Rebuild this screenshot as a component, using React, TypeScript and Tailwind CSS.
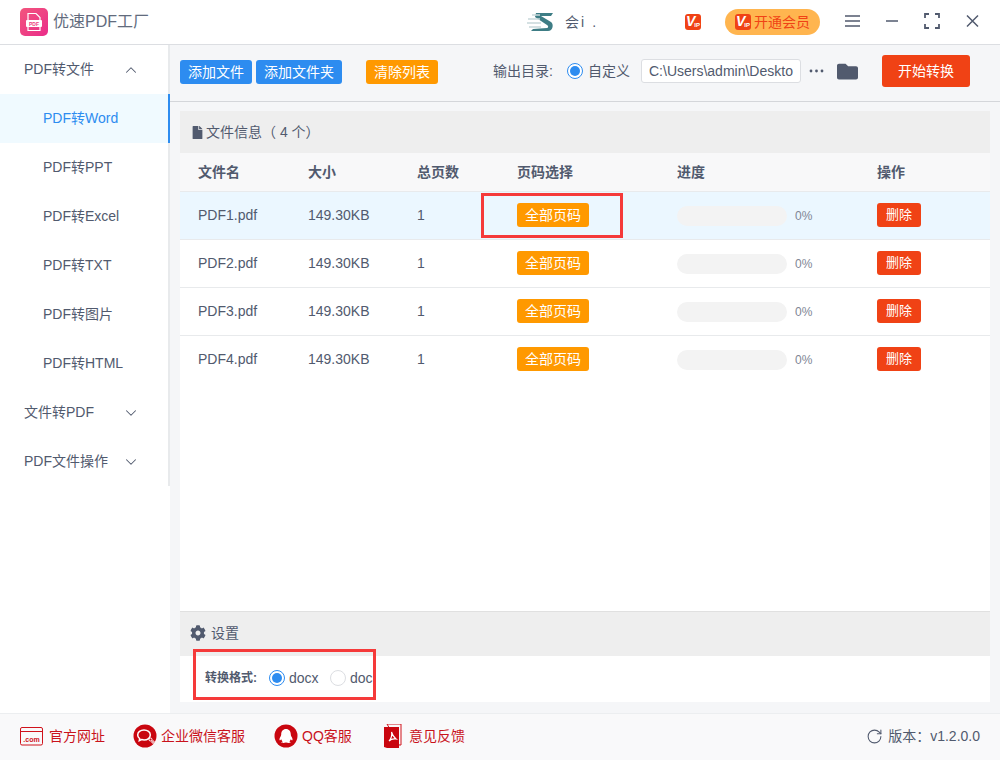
import React from "react";
import { ChevronDown, ChevronUp, RotateCw } from "lucide-react";
import { FaCog, FaFile, FaFolder } from "react-icons/fa";

const font = { fontFamily: '"Liberation Sans", "Noto Sans CJK SC", sans-serif' };

const subItems = ["PDF转Word", "PDF转PPT", "PDF转Excel", "PDF转TXT", "PDF转图片", "PDF转HTML"];
const files = ["PDF1.pdf", "PDF2.pdf", "PDF3.pdf", "PDF4.pdf"];
const columns = "grid grid-cols-[110px_109px_100px_160px_200px_1fr] items-center pl-[18px]";

const VipMark = ({ className }: { className: string }) => (
  <span className={`relative inline-block shrink-0 rounded-[3px] bg-[#f04215] text-white ${className}`}>
    <span className="absolute left-[1px] top-[-2px] text-[14px] font-bold italic leading-[18px]">V</span>
    <span className="absolute bottom-[1px] right-[1px] text-[6px] font-bold leading-[7px]">IP</span>
  </span>
);

const Radio = ({ checked }: { checked?: boolean }) =>
  checked ? (
    <span className="flex h-4 w-4 shrink-0 items-center justify-center rounded-full border border-[#2d8cf0] bg-white">
      <span className="h-[10px] w-[10px] rounded-full bg-[#2d8cf0]" />
    </span>
  ) : (
    <span className="h-4 w-4 shrink-0 rounded-full border border-[#dcdee2] bg-white" />
  );

const ComIcon = () => (
  <svg width="23" height="19" viewBox="0 0 23 19" fill="none" stroke="#d0121b" strokeWidth="1">
    <rect x="0.5" y="0.5" width="22" height="17.500" rx="1.500" />
    <path d="M1 4.500h21" />
    <text x="11.500" y="14.500" fontSize="7" fontWeight="700" fill="#d0121b" stroke="none" textAnchor="middle">.com</text>
  </svg>
);

const WechatIcon = () => (
  <svg width="24" height="24" viewBox="0 0 24 24">
    <circle cx="12" cy="12" r="11.500" fill="#c9060f" />
    <path d="M11 6c-3.600 0-6.300 2.200-6.300 5 0 1.500.8 2.800 2 3.700l-.4 2 2.300-1.100c.8.2 1.600.4 2.400.4 3.600 0 6.300-2.200 6.300-5S14.600 6 11 6z" fill="none" stroke="#fff" strokeWidth="1.500" />
    <circle cx="17.500" cy="15.500" r="1.500" fill="none" stroke="#fff" strokeWidth="1" />
    <circle cx="20" cy="18" r="1.200" fill="none" stroke="#fff" strokeWidth="1" />
  </svg>
);

const QQIcon = () => (
  <svg width="24" height="24" viewBox="0 0 24 24">
    <circle cx="12" cy="12" r="11.500" fill="#c9060f" />
    <path d="M12 5c-3 0-4.800 2.300-4.800 5.200 0 1-.2 1.600-.9 2.800-.8 1.400-1.100 2.900-.6 3.300.4.300 1-.3 1.500-1 .3 1 .8 1.700 1.400 2.200-.8.300-1.300.7-1.100 1.100.3.500 2.800.5 4.500 0 1.700.5 4.200.5 4.500 0 .2-.4-.3-.8-1.100-1.100.6-.5 1.100-1.200 1.400-2.200.5.700 1.100 1.300 1.500 1 .5-.4.200-1.900-.6-3.300-.7-1.200-.9-1.800-.9-2.800C16.800 7.300 15 5 12 5z" fill="#fff" />
  </svg>
);

const PdfIcon = () => (
  <svg width="18" height="24" viewBox="0 0 18 24">
    <path d="M3 0h14v21h-2z" fill="none" stroke="#d0121b" strokeWidth="1" />
    <path d="M0 3h15v21H3l-3-1z" fill="#c9060f" />
    <path d="M7.500 8c.8 3 2 5 4.500 7-2-.3-5 0-7 2 2-2 3.500-6 2.500-9z" fill="none" stroke="#fff" strokeWidth="1.200" />
  </svg>
);

const FooterLink = ({ icon, label, className }: { icon: React.ReactNode; label: string; className: string }) => (
  <div className={`flex items-center text-[14px] text-[#c9121b] ${className}`}>
    {icon}
    <span>{label}</span>
  </div>
);

const App = () => {
  return (
    <div style={font} className="flex h-[760px] w-[1000px] flex-col overflow-hidden bg-white text-[14px] text-[#515a6e]">
      {/* Title bar */}
      <header className="flex h-[45px] shrink-0 items-center border-b border-[#dcdee2] bg-white pl-5">
        <div className="flex h-7 w-7 items-center justify-center rounded-[5px] bg-gradient-to-br from-[#f2547d] to-[#ea2a8a]">
          <svg width="18" height="20" viewBox="0 0 18 20" fill="none" stroke="#fff" strokeWidth="1.200">
            <path d="M3 8V1.500h8l4 4V8M3 15v3.500h12V15" />
            <rect x="1" y="8" width="16" height="7" rx="1" fill="#fff" stroke="none" />
            <text x="9" y="13.500" fontSize="5" fontWeight="700" fill="#ee3d80" stroke="none" textAnchor="middle">PDF</text>
          </svg>
        </div>
        <span className="ml-[5px] w-[474px] text-[16px] text-[#626b7d]">优速PDF工厂</span>
        <svg width="28" height="22" viewBox="0 0 28 22">
          <path d="M9 2h17l-2 3H14l10 6c3 2 2 9-3 9H4l2-2 14-1c1 0 2-2 0-3L8 6z" fill="#3e7d85" />
          <path d="M1 8h12M0 12h14M2 16h12M5 4h8" stroke="#c7d8da" strokeWidth="1.500" />
        </svg>
        <span className="ml-[10px] w-[120px] text-[14px]">
          会<span className="ml-[2px]">i</span>
          <span className="ml-[8px]">.</span>
        </span>
        <VipMark className="h-4 w-4" />
        <div className="ml-6 flex h-[26px] w-[95px] items-center justify-center gap-[3px] rounded-[13px] bg-[#ffb54f] text-[14px] text-[#f04215]">
          <VipMark className="h-4 w-4" />
          <span>开通会员</span>
        </div>
        <svg className="mb-[2px] ml-[24px]" width="17" height="14" viewBox="0 0 17 14" stroke="#515a6e" strokeWidth="1.500">
          <path d="M1 2h15M1 7h15M1 12h15" />
        </svg>
        <svg className="mb-[2px] ml-[24px]" width="15" height="14" viewBox="0 0 15 14" stroke="#515a6e" strokeWidth="1.500">
          <path d="M1 7h12" />
        </svg>
        <svg className="mb-[2px] ml-[24px]" width="17" height="16" viewBox="0 0 17 16" fill="none" stroke="#515a6e" strokeWidth="1.800">
          <path d="M1 5V1h4M11 1h4v4M15 11v4h-4M5 15H1v-4" />
        </svg>
        <svg className="mb-[2px] ml-[25px]" width="14" height="14" viewBox="0 0 14 14" stroke="#515a6e" strokeWidth="1.500">
          <path d="M1 1.500l11 11M12 1.500l-11 11" />
        </svg>
      </header>

      <div className="flex min-h-0 flex-1">
        {/* Sidebar */}
        <aside className="w-[170px] shrink-0 bg-white">
          <div className="border-r-2 border-[#e8eaec]">
            <div className="flex h-[49px] items-center justify-between pl-6 pr-[28px]">
              <span>PDF转文件</span>
              <ChevronUp size={18} strokeWidth={1.4} />
            </div>
            {subItems.map((item, i) => (
              <div
                key={item}
                className={
                  i === 0
                    ? "-mr-[2px] flex h-[49px] items-center border-r-2 border-[#2d8cf0] bg-[#f0faff] pl-[43px] text-[#2d8cf0]"
                    : "flex h-[49px] items-center pl-[43px]"
                }
              >
                {item}
              </div>
            ))}
            <div className="flex h-[49px] items-center justify-between pl-6 pr-[28px]">
              <span>文件转PDF</span>
              <ChevronDown size={18} strokeWidth={1.4} />
            </div>
            <div className="flex h-[49px] items-center justify-between pl-6 pr-[28px]">
              <span>PDF文件操作</span>
              <ChevronDown size={18} strokeWidth={1.4} />
            </div>
          </div>
        </aside>

        {/* Main area */}
        <main className="flex min-w-0 flex-1 flex-col bg-[#f5f6f8]">
          <div className="flex h-[57px] shrink-0 items-center border-b border-[#d4d6da] pb-[4px] pl-[10px]">
            <button className="mt-[2px] h-6 w-[72px] rounded-[3px] bg-[#2d8cf0] text-[14px] text-white">添加文件</button>
            <button className="ml-1 mt-[2px] h-6 w-[86px] rounded-[3px] bg-[#2d8cf0] text-[14px] text-white">添加文件夹</button>
            <button className="ml-6 mt-[2px] h-6 w-[72px] rounded-[3px] bg-[#ff9900] text-[14px] text-white">清除列表</button>
            <span className="ml-[55px] w-[74px]">输出目录:</span>
            <Radio checked />
            <span className="ml-[5px] w-[53px]">自定义</span>
            <div className="flex h-6 w-40 items-center overflow-hidden whitespace-nowrap rounded-[3px] border border-[#dcdee2] bg-white pl-[7px]">
              C:\Users\admin\Deskto
            </div>
            <svg className="ml-2" width="15" height="4" viewBox="0 0 15 4" fill="#515a6e">
              <circle cx="2" cy="2" r="1.400" />
              <circle cx="7.500" cy="2" r="1.400" />
              <circle cx="13" cy="2" r="1.400" />
            </svg>
            <FaFolder className="ml-[13px]" size={21} color="#515a6e" />
            <button className="ml-6 h-8 w-[88px] rounded-[3px] bg-[#f04215] text-[14px] text-white">开始转换</button>
          </div>

          <section className="mx-[10px] mt-[9px] flex h-[591px] flex-col bg-white">
            <div className="flex h-[42px] shrink-0 items-center bg-[#eeeeee] pl-[11px]">
              <FaFile size={13} color="#515a6e" />
              <span className="ml-[2px]">文件信息（ 4 个）</span>
            </div>
            <div className={`${columns} h-[38px] shrink-0 bg-[#f8f8f9] font-bold`}>
              <span>文件名</span>
              <span>大小</span>
              <span>总页数</span>
              <span>页码选择</span>
              <span>进度</span>
              <span>操作</span>
            </div>
            {files.map((file, i) => (
              <div
                key={file}
                className={`${columns} h-[48px] shrink-0 border-y-[1px] border-t-[#e8eaec] border-b-transparent ${
                  i === 0 ? "bg-[#ebf7ff]" : "bg-white"
                } ${i === 3 ? "border-b-[#e8eaec]" : ""}`}
              >
                <span>{file}</span>
                <span>149.30KB</span>
                <span>1</span>
                <span>
                  <button className="h-6 w-[72px] rounded-[3px] bg-[#ff9900] text-[14px] text-white">全部页码</button>
                </span>
                <span className="flex items-center pt-[2px]">
                  <span className="h-5 w-[110px] rounded-[10px] bg-[#f3f3f3]" />
                  <span className="ml-2 text-[12px] text-[#808695]">0%</span>
                </span>
                <span>
                  <button className="h-6 w-11 rounded-[3px] bg-[#f04215] text-[13px] text-white">删除</button>
                </span>
              </div>
            ))}
            <div className="flex-1" />
            <div className="flex h-[45px] shrink-0 items-center gap-[5px] border-t border-[#e0e0e0] bg-[#eeeeee] pb-[2px] pl-[10px]">
              <FaCog size={16} color="#515a6e" />
              <span>设置</span>
            </div>
            <div className="flex h-[46px] shrink-0 items-center pb-[2px] pl-[25px]">
              <span className="w-[64px] text-[12px] font-bold">转换格式:</span>
              <Radio checked />
              <span className="ml-1 w-[41px]">docx</span>
              <Radio />
              <span className="ml-1">doc</span>
            </div>
          </section>
        </main>
      </div>

      {/* Footer */}
      <footer className="flex h-[47px] shrink-0 items-center border-t border-[#eceef0] bg-[#f9f9fa] pb-[2px] pl-5">
        <FooterLink icon={<ComIcon />} label="官方网址" className="w-[113px] gap-[6px]" />
        <FooterLink icon={<WechatIcon />} label="企业微信客服" className="w-[141px] gap-1" />
        <FooterLink icon={<QQIcon />} label="QQ客服" className="w-[110px] gap-[4px]" />
        <FooterLink icon={<PdfIcon />} label="意见反馈" className="gap-[7px]" />
        <div className="ml-auto flex items-center gap-[5px] pr-5">
          <RotateCw size={17} strokeWidth={1.5} />
          <span>{"版本\uFF1Av1.2.0.0"}</span>
        </div>
      </footer>

      {/* Red annotation frames */}
      <div className="pointer-events-none absolute left-[481px] top-[193px] h-[45px] w-[142px] border-[3px] border-[#f53a3a]" />
      <div className="pointer-events-none absolute left-[193px] top-[649px] h-[51px] w-[183px] border-[3px] border-[#f53a3a]" />
    </div>
  );
};

export default App;
